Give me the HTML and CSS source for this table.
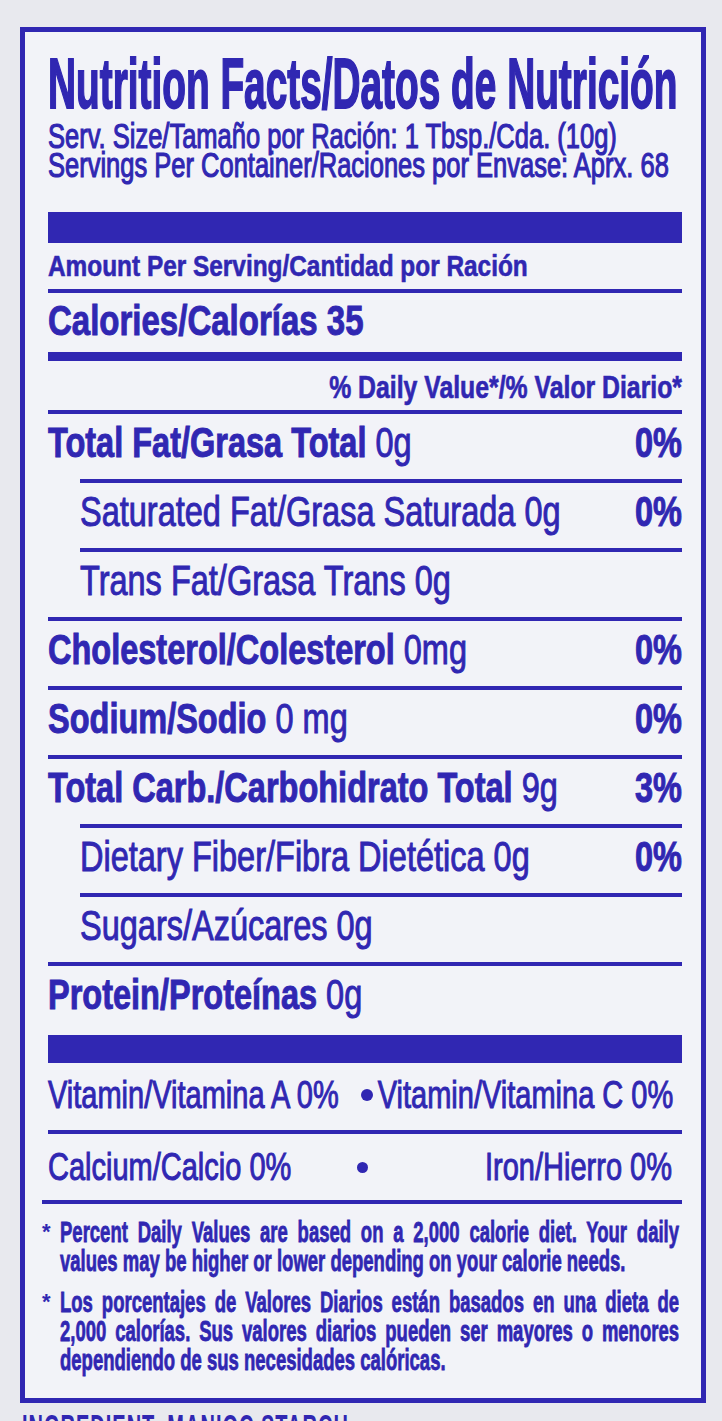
FILE: index.html
```html
<!DOCTYPE html>
<html lang="es">
<head>
<meta charset="utf-8">
<title>Nutrition Facts / Datos de Nutrición</title>
<link rel="stylesheet" href="styles.css">
</head>
<body>
<div class="label">
  <header class="head">
    <h1 class="title"><span class="t">Nutrition Facts/Datos de Nutrición</span></h1>
    <p class="serv"><span class="t">Serv. Size/Tamaño por Ración: 1 Tbsp./Cda. (10g)</span></p>
    <p class="servings"><span class="t">Servings Per Container/Raciones por Envase: Aprx. 68</span></p>
  </header>
  <div class="bar"></div>
  <div class="amount"><span class="t">Amount Per Serving/Cantidad por Ración</span></div>
  <div class="calories"><span class="t">Calories/Calorías 35</span></div>
  <div class="dv"><span class="t">% Daily Value*/% Valor Diario*</span></div>

  <div class="row"><span class="t"><b>Total Fat/Grasa Total</b> 0g</span><span class="t pct">0%</span></div>
  <div class="row sub"><span class="t">Saturated Fat/Grasa Saturada 0g</span><span class="t pct">0%</span></div>
  <div class="row sub"><span class="t">Trans Fat/Grasa Trans 0g</span></div>
  <div class="row"><span class="t"><b>Cholesterol/Colesterol</b> 0mg</span><span class="t pct">0%</span></div>
  <div class="row"><span class="t"><b>Sodium/Sodio</b> 0 mg</span><span class="t pct">0%</span></div>
  <div class="row"><span class="t"><b>Total Carb./Carbohidrato Total</b> 9g</span><span class="t pct">3%</span></div>
  <div class="row sub"><span class="t">Dietary Fiber/Fibra Dietética 0g</span><span class="t pct">0%</span></div>
  <div class="row sub"><span class="t">Sugars/Azúcares 0g</span></div>
  <div class="row last"><span class="t"><b>Protein/Proteínas</b> 0g</span></div>

  <div class="bar bar-thin"></div>

  <div class="vit">
    <span class="t">Vitamin/Vitamina A 0%</span>
    <span class="dot vit-dot"></span>
    <span class="t vit-right">Vitamin/Vitamina C 0%</span>
  </div>
  <div class="min">
    <span class="t">Calcium/Calcio 0%</span>
    <span class="dot min-dot"></span>
    <span class="t min-right">Iron/Hierro 0%</span>
  </div>

  <div class="notes">
    <div class="note">
      <span class="star">*</span>
      <div class="lines">
        <div class="ln j"><span class="t">Percent Daily Values are based on a 2,000 calorie diet. Your daily</span></div>
        <div class="ln"><span class="t">values may be higher or lower depending on your calorie needs.</span></div>
      </div>
    </div>
    <div class="note">
      <span class="star">*</span>
      <div class="lines">
        <div class="ln j"><span class="t">Los porcentajes de Valores Diarios están basados en una dieta de</span></div>
        <div class="ln j"><span class="t">2,000 calorías. Sus valores diarios pueden ser mayores o menores</span></div>
        <div class="ln"><span class="t">dependiendo de sus necesidades calóricas.</span></div>
      </div>
    </div>
  </div>
</div>
<p class="ingr">INGREDIENT: MANIOC STARCH</p>
</body>
</html>
```

FILE: styles.css
```css
* {
  box-sizing: border-box;
  margin: 0;
  padding: 0;
}

html,
body {
  overflow: hidden;
}

body {
  width: 722px;
  height: 1421px;
  background: #e8e9ee;
  font-family: "Liberation Sans", Arial, sans-serif;
  color: #3027b2;
}

.label {
  margin: 27px 0 0 20px;
  width: 686px;
  border: 5px solid currentColor;
  background: #f2f3f8;
  padding: 0 19px 0 23px;
}

.t {
  display: inline-block;
  white-space: nowrap;
  line-height: 1;
  transform-origin: 50% 50%;
  -webkit-text-stroke: 0.75px currentColor;
}

b {
  font-weight: 700;
}

/* header */
.head {
  padding-top: 22px;
}

.title {
  height: 62px;
  display: flex;
  align-items: center;
  font-size: 38.8px;
  font-weight: 700;
}

.title .t {
  transform: scaleY(1.82);
  -webkit-text-stroke: 1px currentColor;
}

.serv,
.servings {
  display: flex;
  align-items: center;
  font-size: 25.5px;
  font-weight: 400;
}

.serv {
  margin-top: 4px;
  height: 32px;
}

.servings {
  height: 27px;
}

.serv .t,
.servings .t {
  line-height: 0.8;
  transform: scaleY(1.38);
  -webkit-text-stroke: 0.85px currentColor;
}

.bar {
  margin-top: 33px;
  height: 31px;
  background: currentColor;
}

.bar-thin {
  margin-top: 0;
  height: 28px;
}

.amount {
  height: 46px;
  display: flex;
  align-items: center;
  font-size: 24.4px;
  font-weight: 700;
}

.amount .t {
  transform: scaleY(1.22);
  -webkit-text-stroke: 0.5px currentColor;
}

.calories {
  height: 63px;
  border-top: 4px solid currentColor;
  padding-bottom: 5px;
  display: flex;
  align-items: center;
  font-size: 33px;
  font-weight: 700;
}

.calories .t {
  transform: scaleY(1.28);
}

.dv {
  height: 58px;
  border-top: 9px solid currentColor;
  padding-top: 5px;
  display: flex;
  align-items: center;
  justify-content: flex-end;
  font-size: 24.8px;
  font-weight: 700;
}

.dv .t {
  transform: scaleY(1.3);
  -webkit-text-stroke: 0.5px currentColor;
}

/* nutrient rows */
.row {
  height: 69px;
  border-top: 4px solid currentColor;
  padding-bottom: 6px;
  display: flex;
  align-items: center;
  justify-content: space-between;
  font-size: 32.5px;
  font-weight: 400;
}

.row .t {
  transform: scaleY(1.32);
}

.row.sub {
  margin-left: 32px;
}

.row.last {
  height: 73px;
  padding-bottom: 11px;
}

.pct {
  font-weight: 700;
}

/* vitamins & minerals */
.vit,
.min {
  display: flex;
  align-items: center;
  font-size: 29px;
}

.vit {
  height: 67px;
  padding-bottom: 3px;
}

.min {
  height: 70px;
  border-top: 4px solid currentColor;
  padding-right: 10px;
}

.vit .t,
.min .t {
  transform: scaleY(1.32);
}

.dot {
  flex: none;
  border-radius: 50%;
  background: currentColor;
}

.vit-dot {
  width: 12px;
  height: 12px;
  margin-left: 22px;
}

.vit-right {
  margin-left: 5px;
}

.min-dot {
  width: 11px;
  height: 11px;
  margin-left: 66px;
}

.min-right {
  margin-left: auto;
}

/* footnotes */
.notes {
  border-top: 4px solid currentColor;
  padding: 14px 3px 23px 0;
  margin-left: -6px;
  display: flex;
  flex-direction: column;
  gap: 12px;
  font-size: 18.5px;
  font-weight: 700;
}

.note {
  display: flex;
}

.star {
  flex: none;
  width: 18px;
  margin-top: 3px;
  font-size: 22px;
  font-weight: 700;
  line-height: 1;
}

.lines {
  flex: 1;
  min-width: 0;
}

.ln {
  height: 29px;
  display: flex;
  align-items: center;
}

.ln .t {
  line-height: 0.9;
  transform: scaleY(1.62);
  -webkit-text-stroke: 0.5px currentColor;
}

.ln.j .t {
  flex: 1;
  display: block;
  text-align: justify;
  text-align-last: justify;
}

.ingr {
  margin: 5px 0 0 22px;
  font-size: 20px;
  font-weight: 700;
  line-height: 1;
  letter-spacing: 1px;
  white-space: nowrap;
  transform: scaleY(1.8);
  transform-origin: left top;
}
```
